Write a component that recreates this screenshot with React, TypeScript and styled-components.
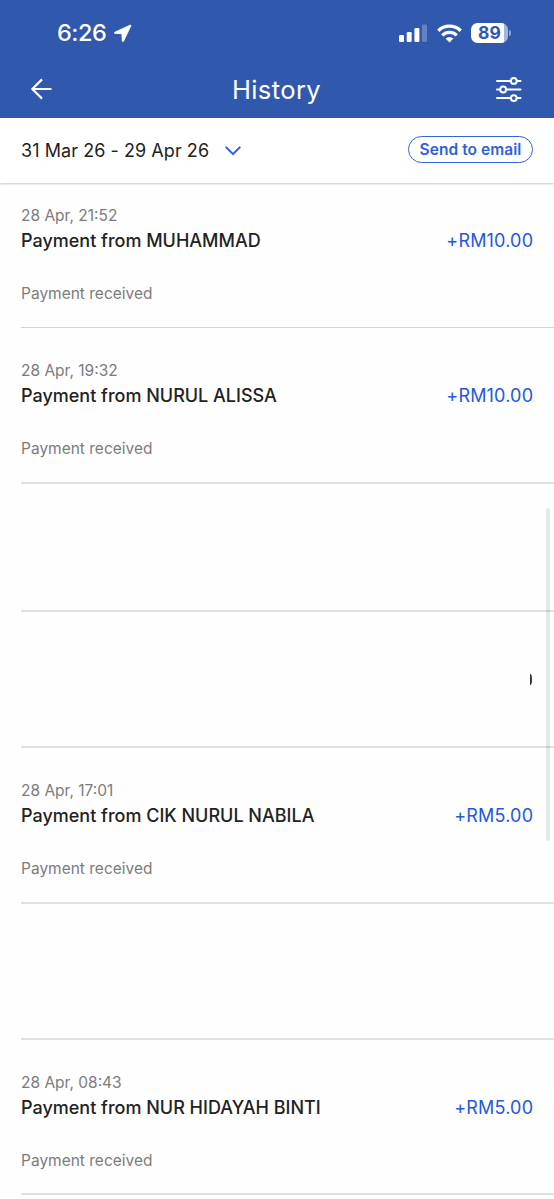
import React from "react";
import styled, { createGlobalStyle } from "styled-components";

const GlobalStyle = createGlobalStyle`
  *, *::before, *::after { box-sizing: border-box; }
  body {
    margin: 0;
    background: #fefefe;
    font-family: Inter, "Liberation Sans", sans-serif;
    color: #222;
    overflow: hidden;
  }
`;

const Screen = styled.div`
  position: relative;
  width: 554px;
  height: 1199px;
  overflow: hidden;
  display: flex;
  flex-direction: column;
`;

const Header = styled.header`
  flex: none;
  height: 118px;
  background: #3059ae;
  color: #fff;
`;

const StatusBar = styled.div`
  display: flex;
  justify-content: space-between;
  align-items: center;
  height: 62px;
  padding: 4px 43px 0 57px;
`;

const Clock = styled.div`
  display: flex;
  align-items: center;
  gap: 7px;
  font-size: 23.5px;
  line-height: 28px;
  font-weight: 500;
  letter-spacing: -0.45px;
`;

const StatusIcons = styled.div`
  display: flex;
  align-items: center;
  gap: 9px;
  svg { display: block; }
`;

const Battery = styled.div`
  display: flex;
  align-items: center;
  gap: 1px;
`;

const BatteryBody = styled.div`
  width: 37px;
  height: 20px;
  border-radius: 6.5px;
  background: linear-gradient(to right, #fff 33px, #a3b5dc 33px);
  color: #3059ae;
  font-size: 17.5px;
  line-height: 20px;
  font-weight: 700;
  text-align: center;
`;

const BatteryTip = styled.div`
  width: 2px;
  height: 6px;
  border-radius: 0 2px 2px 0;
  background: #8fa5d4;
`;

const NavBar = styled.div`
  display: grid;
  grid-template-columns: 60px 1fr 60px;
  align-items: center;
  height: 56px;
  padding: 0 32px 2px 30px;
  svg { display: block; }
  svg:last-child { justify-self: end; }
`;

const Title = styled.h1`
  margin: 0;
  padding: 2px 0 0 1px;
  text-align: center;
  font-size: 25.5px;
  line-height: 32px;
  font-weight: 400;
  letter-spacing: 0.4px;
`;

const FilterBar = styled.div`
  flex: none;
  display: flex;
  justify-content: space-between;
  align-items: center;
  height: 65px;
  padding: 0 21px 2px;
  background: #fff;
  box-shadow: 0 1px 2px rgba(0, 0, 0, 0.22);
  z-index: 1;
`;

const DateRange = styled.div`
  display: flex;
  align-items: center;
  gap: 16px;
  padding-top: 2px;
  font-size: 18px;
  letter-spacing: 0.06px;
`;

const EmailButton = styled.button`
  width: 125px;
  height: 27px;
  padding: 1px 0 0;
  border: 1.3px solid #3262dc;
  border-radius: 14px;
  background: #fff;
  color: #2f5fdc;
  font: 600 15.5px/24px Inter, "Liberation Sans", sans-serif;
  letter-spacing: 0.05px;
`;

const List = styled.main`
  padding-left: 21px;
`;

const Row = styled.section<{ $height: number }>`
  display: flex;
  flex-direction: column;
  justify-content: flex-end;
  height: ${(p) => p.$height}px;
  padding: 0 21px 22px 0;
  border-bottom: 2px solid #dfdfdf;
  &:first-child { border-bottom: 1px solid #d2d2d2; }
  &:last-child { padding-bottom: 21px; }
`;

const Meta = styled.div`
  font-size: 15.5px;
  line-height: 22px;
  color: #7c7c7c;
`;

const Main = styled.div`
  display: flex;
  justify-content: space-between;
  font-size: 18px;
  line-height: 28px;
  font-weight: 500;
  margin-bottom: 28px;
`;

const Amount = styled.span`
  margin-right: -0.2px;
  font-weight: 430;
  letter-spacing: 0.18px;
  color: #2458e0;
`;

const HiddenAmount = styled.div`
  align-self: flex-end;
  width: 2px;
  height: 11px;
  margin: 0 1px 39px 0;
  border-radius: 0 2px 2px 0 / 0 5px 5px 0;
  background: #333;
`;

const ScrollThumb = styled.div`
  position: absolute;
  top: 508px;
  right: 4px;
  width: 4px;
  height: 333px;
  border-radius: 2px;
  background: rgba(0, 0, 0, 0.09);
`;

type Entry = { height: number; time?: string; name?: string; amount?: string; masked?: boolean };

const entries: Entry[] = [
  { height: 145, time: "28 Apr, 21:52", name: "MUHAMMAD", amount: "+RM10.00" },
  { height: 156, time: "28 Apr, 19:32", name: "NURUL ALISSA", amount: "+RM10.00" },
  { height: 128 },
  { height: 136, masked: true },
  { height: 156, time: "28 Apr, 17:01", name: "CIK NURUL NABILA", amount: "+RM5.00" },
  { height: 136 },
  { height: 155, time: "28 Apr, 08:43", name: "NUR HIDAYAH BINTI", amount: "+RM5.00" },
];

export default function App() {
  return (
    <Screen>
      <GlobalStyle />
      <Header>
        <StatusBar>
          <Clock>
            6:26
            <svg width="19" height="19" viewBox="0 0 19 19">
              <path d="M17 1.2 1.8 8.2Q.4 9 2 9.4L8.8 9.7 9.3 16.8Q9.7 18.6 10.7 17L17.8 2Q18.2.7 17 1.2Z" fill="#fff" stroke="#fff" strokeWidth=".8" strokeLinejoin="round" />
            </svg>
          </Clock>
          <StatusIcons>
            <svg width="29" height="19" viewBox="0 0 29 19" fill="#fff">
              <rect x="0" y="11" width="5" height="7" rx="1.3" />
              <rect x="7.7" y="8" width="5" height="10" rx="1.3" />
              <rect x="15.4" y="4" width="5" height="14" rx="1.3" />
              <rect x="23" y="0.5" width="5" height="17.5" rx="1.3" opacity=".25" />
            </svg>
            <svg width="25" height="19" viewBox="0 0 25 19" fill="none" stroke="#fff" strokeWidth="3.3">
              <path d="M1.3 6.7a16 16 0 0 1 22.4 0" />
              <path d="M5.3 11.3a10.200 10.200 0 0 1 14.400 0" />
              <path d="M12.5 18.4 8.6 14.5q3.9-3.2 7.8 0Z" fill="#fff" stroke="none" />
            </svg>
            <Battery>
              <BatteryBody>89</BatteryBody>
              <BatteryTip />
            </Battery>
          </StatusIcons>
        </StatusBar>
        <NavBar>
          <svg width="22" height="22" viewBox="0 0 22 22" fill="none" stroke="#fff" strokeWidth="2.2">
            <path d="M21.5 11H2.5M12 1.4 2.4 11 12 20.6" />
          </svg>
          <Title>History</Title>
          <svg width="27" height="26" viewBox="0 0 27 26" fill="none" stroke="#fff" strokeWidth="2" strokeLinecap="round">
            <path d="M2 4.9H15.6M22 4.9H25.5M2 13.5H5M11.5 13.5H25.5M2 22.1H15.6M22 22.1H25.5" />
            <circle cx="18.8" cy="4.9" r="2.9" />
            <circle cx="8.2" cy="13.5" r="2.9" />
            <circle cx="18.8" cy="22.1" r="2.9" />
          </svg>
        </NavBar>
      </Header>
      <FilterBar>
        <DateRange>
          31 Mar 26 - 29 Apr 26
          <svg width="16" height="10" viewBox="0 0 16 10" fill="none" stroke="#2c5be6" strokeWidth="2" strokeLinecap="round" strokeLinejoin="round">
            <path d="M1.3 1.4 8 8.1l6.7-6.7" />
          </svg>
        </DateRange>
        <EmailButton>Send to email</EmailButton>
      </FilterBar>
      <List>
        {entries.map((e, i) => (
          <Row key={i} $height={e.height}>
            {e.masked && <HiddenAmount />}
            {e.time && (
              <>
                <Meta>{e.time}</Meta>
                <Main>
                  <span>Payment from {e.name}</span>
                  <Amount>{e.amount}</Amount>
                </Main>
                <Meta>Payment received</Meta>
              </>
            )}
          </Row>
        ))}
      </List>
      <ScrollThumb />
    </Screen>
  );
}
